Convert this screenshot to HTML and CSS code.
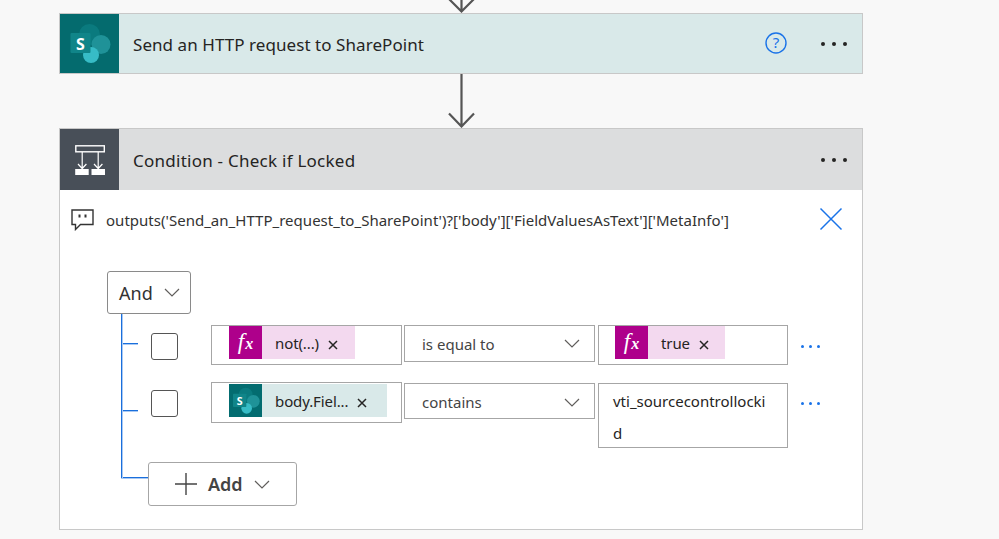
FILE: index.html
```html
<!DOCTYPE html>
<html lang="en">
<head>
<meta charset="utf-8">
<title>Condition</title>
<link rel="stylesheet" href="styles.css">
</head>
<body>
<main class="flow">
  <div class="connector top">
    <svg width="40" height="13" viewBox="0 0 40 13"><path d="M20.500 0V11.500M8 -1L20.500 11.500L33 -1" class="arrow"/></svg>
  </div>
  <section class="card action">
    <header class="head sp">
      <div class="tile sp-tile">
        <svg width="42" height="42" viewBox="0 0 42 42">
          <circle cx="20.500" cy="11.500" r="10.500" fill="#0a7a7e"/>
          <circle cx="32" cy="21.500" r="9.500" fill="#1f9298"/>
          <circle cx="22" cy="32" r="8" fill="#37bcc6"/>
          <rect x="1.500" y="10" width="20" height="20" rx="1" fill="#108589"/>
          <text x="11.500" y="26.500" class="sp-s">S</text>
        </svg>
      </div>
      <h2 class="title t1">Send an HTTP request to SharePoint</h2>
      <svg class="help" width="22" height="22" viewBox="0 0 22 22">
        <circle cx="11" cy="11" r="10" class="help-ring"/>
        <text x="11" y="16" class="help-q">?</text>
      </svg>
      <span class="more"><i></i><i></i><i></i></span>
    </header>
  </section>
  <div class="connector mid">
    <svg width="40" height="54" viewBox="0 0 40 54"><path d="M20.500 0V52.500M8 39.500L20.500 52.500L33 39.500" class="arrow"/></svg>
  </div>
  <section class="card condition">
    <header class="head cond">
      <div class="tile cond-tile">
        <svg width="32" height="32" viewBox="0 0 32 32">
          <rect x="1.800" y="1.800" width="28.500" height="6" fill="none" stroke="#fff" stroke-width="1.400"/>
          <path d="M8.200 8V24M4 20L8.200 24.500L12.400 20M24.200 8V24M20 20L24.200 24.500L28.400 20" fill="none" stroke="#fff" stroke-width="1.200"/>
          <rect x="1.200" y="25" width="13.500" height="6" fill="#fff"/>
          <rect x="17.500" y="25" width="13.500" height="6" fill="#fff"/>
        </svg>
      </div>
      <h2 class="title t2">Condition - Check if Locked</h2>
      <span class="more"><i></i><i></i><i></i></span>
    </header>
    <div class="body">
      <div class="note">
        <svg width="24" height="22" viewBox="0 0 24 22"><path d="M1 1H22V15.500H9.500L4.500 20.500V15.500H1Z" fill="none" stroke="#333" stroke-width="1.400"/><path d="M8.500 5.500V8.500M14.500 5.500V8.500" stroke="#333" stroke-width="2"/></svg>
        <span class="expr">outputs('Send_an_HTTP_request_to_SharePoint')?['body']['FieldValuesAsText']['MetaInfo']</span>
        <svg class="close" width="24" height="24" viewBox="0 0 24 24"><path d="M1.500 1.500L22.500 22.500M22.500 1.500L1.500 22.500" stroke="#1a73e8" stroke-width="1.500" fill="none"/></svg>
      </div>
      <button class="and" type="button">And<svg width="16" height="9" viewBox="0 0 16 9" class="chev"><path d="M1 1L8 8L15 1"/></svg></button>
      <div class="tree">
        <div class="row">
          <span class="branch"></span>
          <span class="check"></span>
          <div class="box token-box">
            <span class="token pink"><span class="tok-ico fx-ico">f<small>x</small></span><span class="tok-text">not(...)</span><svg class="x" width="10" height="10" viewBox="0 0 10 10"><path d="M1 1L9 9M9 1L1 9"/></svg></span>
          </div>
          <div class="op">is equal to<svg width="16" height="9" viewBox="0 0 16 9" class="chev"><path d="M1 1L8 8L15 1"/></svg></div>
          <div class="box value-box">
            <span class="token pink short"><span class="tok-ico fx-ico">f<small>x</small></span><span class="tok-text">true</span><svg class="x" width="10" height="10" viewBox="0 0 10 10"><path d="M1 1L9 9M9 1L1 9"/></svg></span>
          </div>
          <span class="dots"><i></i><i></i><i></i></span>
        </div>
        <div class="row">
          <span class="branch b2"></span>
          <span class="check"></span>
          <div class="box token-box tb2">
            <span class="token teal"><span class="tok-ico sp-ico">
              <svg width="28" height="28" viewBox="0 0 42 42">
                <circle cx="20.500" cy="11.500" r="10.500" fill="#0a7a7e"/>
                <circle cx="32" cy="21.500" r="9.500" fill="#1f9298"/>
                <circle cx="22" cy="32" r="8" fill="#37bcc6"/>
                <rect x="1.500" y="10" width="20" height="20" rx="1" fill="#108589"/>
                <text x="11.500" y="26.500" class="sp-s">S</text>
              </svg></span><span class="tok-text">body.Fiel...</span><svg class="x" width="10" height="10" viewBox="0 0 10 10"><path d="M1 1L9 9M9 1L1 9"/></svg></span>
          </div>
          <div class="op op2">contains<svg width="16" height="9" viewBox="0 0 16 9" class="chev"><path d="M1 1L8 8L15 1"/></svg></div>
          <div class="box value-box text-box">vti_sourcecontrollockid</div>
          <span class="dots"><i></i><i></i><i></i></span>
        </div>
        <div class="row add-row">
          <span class="branch long"></span>
          <button class="add" type="button"><svg width="22" height="22" viewBox="0 0 22 22"><path d="M11 0V22M0 11H22" stroke="#444" stroke-width="1.400"/></svg><b>Add</b><svg width="16" height="9" viewBox="0 0 16 9" class="chev"><path d="M1 1L8 8L15 1"/></svg></button>
        </div>
      </div>
    </div>
  </section>
</main>
</body>
</html>
```
FILE: styles.css
```css
* { box-sizing: border-box; }
html, body { margin: 0; height: 100%; }
body {
  background: #f8f8f8;
  color: #252423;
  font-family: "Noto Sans", "Open Sans", sans-serif;
  overflow: hidden;
}
.flow { width: 804px; margin-left: 59px; display: flex; flex-direction: column; }
.connector { display: flex; justify-content: center; }
.connector svg { display: block; }
.connector.top { height: 13px; }
.connector.mid { height: 54px; }
.arrow { fill: none; stroke: #555; stroke-width: 2.2; }
.card { border: 1px solid #c8c8c8; background: #fff; }
.head { display: flex; align-items: center; height: 59px; }
.sp { background: #d9e9e9; }
.cond { background: #dcddde; height: 61px; }
.tile { width: 59px; align-self: stretch; display: flex; align-items: center; justify-content: center; flex: none; }
.sp-tile { background: #046b6e; }
.cond-tile { background: #484f58; }
.sp-s { font: 700 16px "Noto Sans", sans-serif; fill: #fff; text-anchor: middle; }
.title { margin: 2px 0 0 14px; flex: 1; font-weight: 400; font-size: 17px; color: #252423; }
.t1 { letter-spacing: 0.06px; }
.t2 { letter-spacing: 0.25px; }
.help { flex: none; margin: -1px 34px 0 0; }
.help-ring { fill: none; stroke: #1a73e8; stroke-width: 1.400; }
.help-q { font: 400 15px "Noto Sans", sans-serif; fill: #1a73e8; text-anchor: middle; }
.more { display: flex; gap: 7.200px; margin-right: 15px; flex: none; }
.more i { width: 4px; height: 4px; border-radius: 50%; background: #252423; display: block; }
.body { height: 339px; padding: 17px 19px 0 11px; }
.note { display: flex; align-items: center; height: 26px; }
.expr { font-size: 15px; margin-left: 11px; flex: 1; color: #333; letter-spacing: 0.02px; }
.close { margin-top: -2px; flex: none; }
.and {
  display: flex; align-items: center; gap: 11px; margin: 38px 0 0 36px;
  width: 84px; height: 43px; padding: 0 0 0 11px;
  border: 1px solid #8a8a8a; border-radius: 3px; background: #fff;
  font: 400 18px "Noto Sans", sans-serif; color: #333;
}
.chev { fill: none; stroke: #605e5c; stroke-width: 1.200; flex: none; }
.tree { position: relative; margin: 11px 0 0 50px; display: flex; flex-direction: column; }
.tree::before {
  content: ""; position: absolute; left: 0; top: -11px; height: 164px; width: 2px;
  background: linear-gradient(90deg, #1a6fdc 50%, #a9c9f3 50%);
}
.row { display: flex; align-items: flex-start; }
.row + .row { margin-top: 17px; }
.row + .add-row { margin-top: 14px; }
.branch { width: 17px; height: 2px; background: linear-gradient(180deg, #1a6fdc 50%, #a9c9f3 50%); margin-top: 18px; flex: none; }
.branch.b2 { margin-top: 28px; }
.branch.long { width: 27px; margin-top: 15px; }
.check { width: 27px; height: 27px; margin: 8px 33px 0 13px; border: 1px solid #555; border-radius: 3px; background: #fff; flex: none; }
.box { border: 1px solid #a6a6a6; background: #fff; flex: none; }
.token-box { width: 191px; height: 40px; padding: 0 0 0 17px; }
.tb2 { height: 41px; padding-top: 1px; }
.value-box { width: 190px; margin-left: 3px; height: 40px; padding: 0 0 0 16px; }
.text-box { height: 65px; margin-top: 1px; padding: 1px 18px 0 14px; font-size: 15px; line-height: 32px; word-break: break-all; color: #252423; }
.op {
  display: flex; align-items: center; justify-content: space-between; width: 191px; height: 37px; margin-left: 2px;
  padding: 0 14px 0 17px; border: 1px solid #a6a6a6; background: #fff; font-size: 15px; color: #444; flex: none;
}
.op2 { height: 36px; margin-top: 1px; padding-top: 2px; }
.token { display: inline-flex; align-items: center; height: 33px; font-size: 15px; color: #252423; }
.pink { background: #f3d9ef; width: 126px; }
.pink.short { width: 110px; }
.teal { background: #d9e9e9; width: 158px; }
.tok-ico { width: 33px; height: 33px; display: flex; align-items: baseline; justify-content: center; flex: none; }
.fx-ico { background: #ae008b; color: #fff; font: italic 23px/32px "Liberation Serif", serif; }
.fx-ico small { font-size: 16px; font-weight: 700; margin-left: 1px; }
.sp-ico { background: #036c70; align-items: center; }
.tok-text { margin-left: 13px; letter-spacing: -0.1px; }
.x { margin-left: 9px; margin-top: 4px; fill: none; stroke: #252423; stroke-width: 1.500; flex: none; }
.dots { display: flex; gap: 5px; margin: 20px 0 0 13px; flex: none; }
.dots i { width: 3px; height: 3px; border-radius: 50%; background: #1a73e8; display: block; }
.add {
  display: flex; align-items: center; width: 149px; height: 44px; padding: 0 0 0 26px;
  border: 1px solid #a6a6a6; border-radius: 3px; background: #fff; color: #444; font: 400 18px "Noto Sans", sans-serif;
}
.add b { font-weight: 600; margin: 0 11px; }
```
